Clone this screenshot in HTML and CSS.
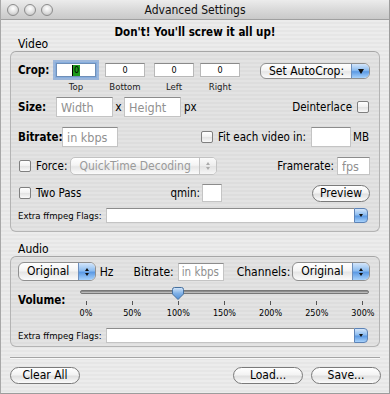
FILE: index.html
```html
<!DOCTYPE html>
<html lang="en">
  <head>
    <meta charset="UTF-8" />
    <meta name="viewport" content="width=device-width, initial-scale=1.0" />
    <title>Advanced Settings</title>
    <link rel="stylesheet" href="styles.css">
  </head>
  <body>
    <div class="window">
      <div class="titlebar">
        <div class="lights"><span></span><span></span><span></span></div>
        <div class="title">Advanced Settings</div>
      </div>
      <div class="content">
        <div class="warning">Don't! You'll screw it all up!</div>

        <div class="group-label">Video</div>
        <div class="group video">
          <div class="row crop-row">
            <label class="lbl bold w-crop">Crop:</label>
            <div class="crop-col">
              <div class="crop-field focus"><span class="sel">0</span></div>
              <span class="caption">Top</span>
            </div>
            <div class="crop-col">
              <input class="crop-field" type="text" value="0" />
              <span class="caption">Bottom</span>
            </div>
            <div class="crop-col c-left">
              <input class="crop-field" type="text" value="0" />
              <span class="caption">Left</span>
            </div>
            <div class="crop-col c-right">
              <input class="crop-field" type="text" value="0" />
              <span class="caption">Right</span>
            </div>
            <div class="popup autocrop">
              <span class="popup-text">Set AutoCrop:</span>
              <span class="popup-arrow"><i class="tri-down"></i></span>
            </div>
          </div>

          <div class="row size-row">
            <label class="lbl bold w-crop">Size:</label>
            <input class="field w-size" type="text" placeholder="Width" />
            <span class="times">x</span>
            <input class="field w-size" type="text" placeholder="Height" />
            <span class="unit">px</span>
            <span class="spacer"></span>
            <span class="lbl">Deinterlace</span>
            <span class="check deint"></span>
          </div>

          <div class="row bitrate-row">
            <label class="lbl bold w-bitrate">Bitrate:</label>
            <input class="field w-kbps" type="text" placeholder="in kbps" />
            <span class="check fit-check"></span>
            <span class="lbl">Fit each video in:</span>
            <input class="field w-mb" type="text" />
            <span class="unit mb">MB</span>
          </div>

          <div class="row force-row">
            <span class="check first"></span>
            <span class="lbl">Force:</span>
            <div class="popup disabled w-decoder">
              <span class="popup-text">QuickTime Decoding</span>
              <span class="popup-arrow gray"><i class="tri-up"></i><i class="tri-down small"></i></span>
            </div>
            <span class="spacer"></span>
            <span class="lbl">Framerate:</span>
            <input class="field w-fps" type="text" placeholder="fps" />
          </div>

          <div class="row pass-row">
            <span class="check first"></span>
            <span class="lbl">Two Pass</span>
            <span class="spacer"></span>
            <span class="lbl qmin">qmin:</span>
            <input class="field w-qmin" type="text" />
            <button class="btn preview">Preview</button>
          </div>

          <div class="row flags-row">
            <span class="small-lbl">Extra ffmpeg Flags:</span>
            <div class="combo">
              <input type="text" />
              <span class="combo-btn"><i class="tri-down small"></i></span>
            </div>
          </div>
        </div>

        <div class="group-label audio-label">Audio</div>
        <div class="group audio">
          <div class="row audio-row">
            <div class="popup w-rate">
              <span class="popup-text">Original</span>
              <span class="popup-arrow"><i class="tri-up"></i><i class="tri-down small"></i></span>
            </div>
            <span class="unit hz">Hz</span>
            <span class="lbl a-bitrate">Bitrate:</span>
            <input class="field w-abitrate" type="text" placeholder="in kbps" />
            <span class="lbl channels">Channels:</span>
            <div class="popup w-channels">
              <span class="popup-text">Original</span>
              <span class="popup-arrow"><i class="tri-up"></i><i class="tri-down small"></i></span>
            </div>
          </div>

          <div class="volume">
            <label class="lbl bold vol-lbl">Volume:</label>
            <div class="slider">
              <div class="track"></div>
              <svg class="thumb" width="12" height="13" viewBox="0 0 12 13">
                <defs>
                  <linearGradient id="thumbFill" x1="0" y1="0" x2="0" y2="1">
                    <stop offset="0" stop-color="#d6e8fb" />
                    <stop offset="0.5" stop-color="#7fb0e6" />
                    <stop offset="1" stop-color="#4f8ed8" />
                  </linearGradient>
                </defs>
                <path d="M2.5 0.5 H9.5 Q11.5 0.5 11.5 2.5 V7 L6 12.5 L0.5 7 V2.5 Q0.5 0.5 2.5 0.5 Z" fill="url(#thumbFill)" stroke="#46709e" />
              </svg>
              <div class="ticks">
                <div class="tick"><i></i><span>0%</span></div>
                <div class="tick"><i></i><span>50%</span></div>
                <div class="tick"><i></i><span>100%</span></div>
                <div class="tick"><i></i><span>150%</span></div>
                <div class="tick"><i></i><span>200%</span></div>
                <div class="tick"><i></i><span>250%</span></div>
                <div class="tick"><i></i><span>300%</span></div>
              </div>
            </div>
          </div>

          <div class="row flags-row audio-flags">
            <span class="small-lbl">Extra ffmpeg Flags:</span>
            <div class="combo">
              <input type="text" />
              <span class="combo-btn"><i class="tri-down small"></i></span>
            </div>
          </div>
        </div>

        <div class="separator"></div>

        <div class="footer">
          <button class="btn clear">Clear All</button>
          <span class="spacer"></span>
          <button class="btn load">Load...</button>
          <button class="btn save">Save...</button>
        </div>
      </div>
    </div>
  </body>
</html>
```

FILE: styles.css
```css
* {
  box-sizing: border-box;
}
body {
  margin: 0;
  background: #c8c8c8;
  font-family: "DejaVu Sans", "Liberation Sans", sans-serif;
  font-stretch: condensed;
  font-size: 11.5px;
  color: #000;
}
input,
button {
  font-family: inherit;
  font-stretch: inherit;
  font-size: 11.5px;
  margin: 0;
}
.window {
  width: 390px;
  height: 394px;
  border-left: 1px solid #a8a8a8;
  border-right: 1px solid #9c9c9c;
  border-bottom: 1px solid #9c9c9c;
  background: repeating-linear-gradient(#ececec 0 2px, #e6e6e6 2px 4px);
  overflow: hidden;
}
.titlebar {
  height: 20px;
  display: flex;
  align-items: center;
  position: relative;
  background: linear-gradient(#ececec, #d6d6d6 60%, #c9c9c9);
  border-bottom: 1px solid #a0a0a0;
}
.lights {
  display: flex;
  gap: 5px;
  padding-left: 6px;
}
.lights span {
  width: 12px;
  height: 12px;
  border-radius: 50%;
  border: 1px solid #8c8c8c;
  background: radial-gradient(circle at 50% 35%, #ffffff 0, #e4e4e4 45%, #b9b9b9 100%);
}
.title {
  position: absolute;
  left: 0;
  right: 0;
  text-align: center;
  font-size: 12px;
  color: #111;
}
.content {
  padding: 6px 9px 0 9px;
}
.warning {
  text-align: center;
  font-weight: bold;
  font-size: 11.5px;
  line-height: 12px;
  height: 12px;
}
.group-label {
  padding-left: 8px;
  height: 13px;
  line-height: 13px;
  font-size: 12px;
}
.audio-label {
  margin-top: 11px;
}
.group {
  width: 370px;
  border: 1px solid #b4b4b4;
  border-top-color: #a6a6a6;
  border-radius: 6px;
  background: rgba(0, 0, 0, 0.035);
  padding: 0 9px 0 7px;
}
.video {
  height: 181px;
  padding-top: 11px;
}
.audio {
  height: 91px;
  padding-top: 5px;
}
.row {
  display: flex;
  align-items: center;
}
.spacer {
  flex: 1;
}
.lbl {
  white-space: nowrap;
}
.bold {
  font-weight: bold;
  font-size: 11.5px;
}
.w-crop {
  width: 38px;
}
.w-bitrate {
  width: 44px;
}

/* crop row */
.crop-row {
  align-items: flex-start;
  height: 27px;
}
.crop-row .w-crop {
  line-height: 14px;
}
.crop-col {
  width: 40px;
  margin-right: 9px;
  display: flex;
  flex-direction: column;
  align-items: center;
}
.crop-col.c-left {
  margin-right: 6px;
}
.crop-field {
  width: 40px;
  height: 14px;
  background: #fff;
  border: 1px solid #b8b8b8;
  border-top-color: #8a8a8a;
  font-size: 9px;
  text-align: center;
  padding: 0;
  display: flex;
  align-items: center;
  justify-content: center;
}
.crop-field.focus {
  box-shadow: 0 0 0 1px #87aede, 0 0 0 3px rgba(110, 155, 215, 0.6);
  border-color: #6f8fb8;
}
.sel {
  background: #1c9a1c;
  color: #000;
  padding: 0 1px;
  line-height: 11px;
  border-left: 1px solid #000;
}
.caption {
  font-size: 9.5px;
  margin-top: 5px;
  line-height: 10px;
  color: #222;
}
.popup {
  display: flex;
  height: 16px;
  border: 1px solid #8f8f8f;
  border-radius: 5px;
  background: linear-gradient(#ffffff, #f4f4f4 45%, #e6e6e6 55%, #fbfbfb);
  overflow: hidden;
}
.popup-text {
  flex: 1;
  padding-left: 7px;
  line-height: 14px;
  white-space: nowrap;
}
.popup-arrow {
  width: 17px;
  flex: none;
  border-left: 1px solid #6d8fbd;
  background: linear-gradient(#d4e6fb, #8dbdf0 45%, #5c9ae4 55%, #a8d2fb);
  display: flex;
  flex-direction: column;
  align-items: center;
  justify-content: center;
  gap: 2px;
}
.popup-arrow.gray {
  background: linear-gradient(#fafafa, #ececec 50%, #e2e2e2 51%, #f6f6f6);
  border-left-color: #c4c4c4;
}
.tri-down {
  width: 0;
  height: 0;
  border-left: 3.5px solid transparent;
  border-right: 3.5px solid transparent;
  border-top: 5px solid #111;
}
.tri-down.small {
  border-left-width: 2.5px;
  border-right-width: 2.5px;
  border-top-width: 3px;
}
.tri-up {
  width: 0;
  height: 0;
  border-left: 2.5px solid transparent;
  border-right: 2.5px solid transparent;
  border-bottom: 3px solid #111;
}
.gray .tri-up {
  border-bottom-color: #aaa;
}
.gray .tri-down {
  border-top-color: #aaa;
}
.autocrop {
  margin-left: auto;
  width: 110px;
  height: 16px;
  border-radius: 6px;
  font-size: 12px;
}
.autocrop .popup-text {
  padding-left: 8px;
}
.autocrop .popup-arrow {
  width: 18px;
}

/* text fields */
.field {
  height: 20px;
  background: #fff;
  border: 1px solid #c4c4c4;
  border-top-color: #8c8c8c;
  padding: 0 4px;
  outline: none;
  font-size: 12.5px;
}
.field::placeholder {
  color: #909090;
}
.size-row {
  margin-top: 7px;
  height: 20px;
}
.w-size {
  width: 57px;
}
.times {
  width: 11px;
  text-align: center;
  font-size: 12px;
}
.unit {
  padding-left: 3px;
}
.check {
  width: 12px;
  height: 12px;
  border: 1px solid #7f7f7f;
  border-radius: 2px;
  background: linear-gradient(#ffffff, #f0f0f0 50%, #e2e2e2 51%, #f9f9f9);
  flex: none;
}
.deint {
  margin-left: 5px;
  margin-right: 1px;
}
.bitrate-row {
  margin-top: 10px;
  height: 20px;
}
.w-kbps {
  width: 56px;
}
.fit-check {
  margin-left: 83px;
  margin-right: 5px;
}
.w-mb {
  width: 40px;
  margin-left: 5px;
}
.mb {
  padding-left: 2px;
}
.force-row {
  margin-top: 10px;
  height: 18px;
}
.first {
  margin-left: 1px;
  margin-right: 5px;
}
.w-decoder {
  width: 147px;
  height: 18px;
  margin-left: 3px;
}
.disabled {
  border-color: #c2c2c2;
  color: #9a9a9a;
  font-size: 12px;
}
.disabled .popup-text {
  line-height: 16px;
  padding-left: 8px;
}
.w-fps {
  width: 33px;
  height: 18px;
  margin-left: 3px;
}
.pass-row {
  margin-top: 9px;
  height: 18px;
}
.w-qmin {
  width: 20px;
  height: 18px;
  margin-left: 2px;
  margin-right: 90px;
}
.btn {
  height: 17px;
  border: 1px solid #7a7a7a;
  border-radius: 9px;
  background: linear-gradient(#ffffff, #f3f3f3 45%, #e0e0e0 55%, #fbfbfb);
  color: #000;
  padding: 0;
  line-height: 15px;
  font-size: 12px;
}
.preview {
  width: 58px;
}

/* flags */
.flags-row {
  margin-top: 6px;
  height: 15px;
}
.small-lbl {
  font-size: 9.5px;
  width: 88px;
  white-space: nowrap;
}
.combo {
  display: flex;
  width: 262px;
  height: 15px;
}
.combo input {
  flex: 1;
  min-width: 0;
  height: 15px;
  border: 1px solid #c4c4c4;
  border-top-color: #8c8c8c;
  border-right: none;
  background: #fff;
  outline: none;
}
.combo-btn {
  width: 14px;
  height: 15px;
  border: 1px solid #5d83b6;
  border-radius: 0 4px 4px 0;
  background: linear-gradient(#d4e6fb, #8dbdf0 45%, #5c9ae4 55%, #a8d2fb);
  display: flex;
  align-items: center;
  justify-content: center;
}

/* audio */
.audio-row {
  height: 19px;
}
.w-rate {
  width: 81px;
  height: 19px;
  border-radius: 6px;
  font-size: 12px;
}
.w-rate .popup-text,
.w-channels .popup-text {
  line-height: 17px;
  padding-left: 8px;
}
.hz {
  padding-left: 4px;
  font-size: 12px;
}
.a-bitrate {
  margin-left: 20px;
  font-size: 12px;
}
.w-abitrate {
  width: 46px;
  height: 18px;
  margin-left: 4px;
  padding: 0 3px;
  font-size: 11.5px;
}
.channels {
  margin-left: 13px;
  font-size: 12px;
}
.w-channels {
  width: 81px;
  height: 19px;
  margin-left: 2px;
  border-radius: 6px;
  font-size: 12px;
}
.volume {
  display: flex;
  margin-top: 6px;
  height: 32px;
}
.vol-lbl {
  width: 62px;
  padding-top: 6px;
}
.slider {
  position: relative;
  width: 289px;
  padding-top: 3px;
}
.track {
  height: 4px;
  border-radius: 2px;
  background: linear-gradient(#7a7a7a, #a9a9a9 60%, #d6d6d6);
  border: 1px solid #777;
}
.thumb {
  position: absolute;
  left: 92px;
  top: 0;
}
.ticks {
  display: flex;
  justify-content: space-between;
  margin: 7px 6px 0 6px;
}
.tick {
  width: 0;
  display: flex;
  flex-direction: column;
  align-items: center;
}
.tick i {
  width: 1px;
  height: 4px;
  background: #555;
}
.tick span {
  font-size: 9px;
  line-height: 12px;
  margin-top: 2px;
  white-space: nowrap;
}
.audio-flags {
  margin-top: 9px;
}
.separator {
  width: 370px;
  height: 2px;
  margin-top: 10px;
  border-top: 1px solid #a4a4a4;
  border-bottom: 1px solid #f8f8f8;
}
.footer {
  display: flex;
  margin-top: 8px;
  width: 371px;
}
.clear,
.load,
.save {
  width: 70px;
  height: 17px;
}
.save {
  margin-left: 8px;
}
```
